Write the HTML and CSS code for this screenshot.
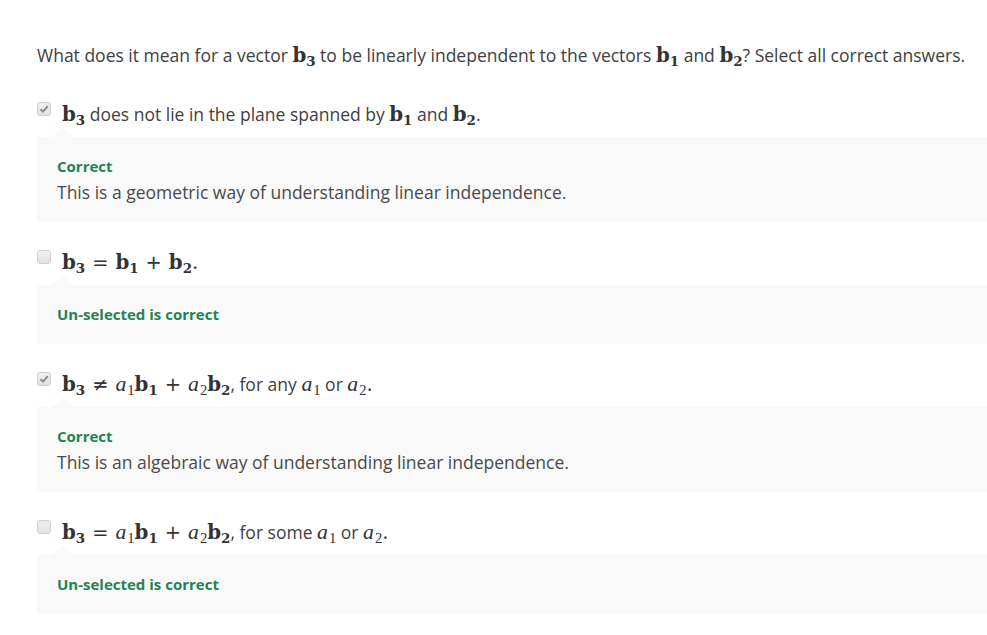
FILE: index.html
```html
<!DOCTYPE html>
<html>
<head>
<meta charset="utf-8">
<link rel="stylesheet" href="styles.css">
</head>
<body>
<div class="quiz">
  <p class="question">What does it mean for a vector <span class="m"><b>b</b><sub>3</sub></span> to be linearly independent to the vectors <span class="m"><b>b</b><sub>1</sub></span> and <span class="m"><b>b</b><sub>2</sub></span>? Select all correct answers.</p>

  <div class="option">
    <span class="cb checked"><svg viewBox="0 0 14 14" width="14" height="14"><path d="M3.5 7.2 L6 9.6 L10.8 4.2" fill="none" stroke="#8a8a8a" stroke-width="2"/></svg></span>
    <span class="label"><span class="m"><b>b</b><sub>3</sub></span> does not lie in the plane spanned by <span class="m"><b>b</b><sub>1</sub></span> and <span class="m"><b>b</b><sub>2</sub></span>.</span>
  </div>
  <div class="feedback">
    <div class="status">Correct</div>
    <div class="explain">This is a geometric way of understanding linear independence.</div>
  </div>

  <div class="option">
    <span class="cb"></span>
    <span class="label"><span class="m"><b>b</b><sub>3</sub><span class="op">=</span><b>b</b><sub>1</sub><span class="op">+</span><b>b</b><sub>2</sub>.</span></span>
  </div>
  <div class="feedback">
    <div class="status">Un-selected is correct</div>
  </div>

  <div class="option">
    <span class="cb checked"><svg viewBox="0 0 14 14" width="14" height="14"><path d="M3.5 7.2 L6 9.6 L10.8 4.2" fill="none" stroke="#8a8a8a" stroke-width="2"/></svg></span>
    <span class="label"><span class="m"><b>b</b><sub>3</sub><span class="op">&ne;</span><i>a</i><sub class="n">1</sub><b>b</b><sub>1</sub><span class="op">+</span><i>a</i><sub class="n">2</sub><b>b</b><sub>2</sub></span>, for any <span class="m"><i>a</i><sub class="n">1</sub></span> or <span class="m"><i>a</i><sub class="n">2</sub>.</span></span>
  </div>
  <div class="feedback">
    <div class="status">Correct</div>
    <div class="explain">This is an algebraic way of understanding linear independence.</div>
  </div>

  <div class="option">
    <span class="cb"></span>
    <span class="label"><span class="m"><b>b</b><sub>3</sub><span class="op">=</span><i>a</i><sub class="n">1</sub><b>b</b><sub>1</sub><span class="op">+</span><i>a</i><sub class="n">2</sub><b>b</b><sub>2</sub></span>, for some <span class="m"><i>a</i><sub class="n">1</sub></span> or <span class="m"><i>a</i><sub class="n">2</sub>.</span></span>
  </div>
  <div class="feedback">
    <div class="status">Un-selected is correct</div>
  </div>
</div>
</body>
</html>
```

FILE: styles.css
```css
html, body {
  margin: 0;
  padding: 0;
  background: #ffffff;
}
body {
  font-family: "Open Sans", "Liberation Sans", sans-serif;
  color: #404040;
  font-size: 17.5px;
}
.quiz {
  padding: 44px 0 0 37px;
}
.question {
  margin: 0 0 32px 0;
  line-height: 22px;
}
.m {
  font-family: "DejaVu Serif", "Liberation Serif", serif;
  font-size: 1.13em;
  color: #333;
  line-height: 1;
}
.m b {
  font-weight: bold;
  line-height: 1;
}
.m i {
  font-family: "Liberation Serif", serif;
  font-style: italic;
  font-size: 1.1em;
  line-height: 1;
  padding-right: 1px;
}
.m sub {
  font-size: 0.68em;
  font-weight: bold;
  vertical-align: -0.28em;
  line-height: 0;
}
.m sub.n {
  font-family: "Liberation Serif", serif;
  font-weight: normal;
  font-size: 0.74em;
}
.op {
  font-family: "DejaVu Sans", sans-serif;
  font-weight: normal;
  margin: 0 7px;
  font-size: 0.98em;
  line-height: 1;
}
.option {
  display: flex;
  align-items: flex-start;
  gap: 11px;
  line-height: 24px;
}
.label {
  padding-top: 4px;
}
.cb {
  flex: none;
  width: 14px;
  height: 14px;
  margin-top: 4px;
  box-sizing: border-box;
  border: 1px solid #cfcfcf;
  border-radius: 3px;
  background: linear-gradient(#f0f0f0, #e2e2e2);
  display: flex;
}
.cb svg {
  margin: -1px;
}
.feedback {
  position: relative;
  background: #f9f9f9;
  margin: 11px 0 24px 0;
  padding: 19px 20px 20px 20px;
}
.feedback::before {
  content: "";
  position: absolute;
  top: -9px;
  left: 15px;
  border-left: 11px solid transparent;
  border-right: 11px solid transparent;
  border-bottom: 9px solid #f9f9f9;
}
.status {
  color: #1f8354;
  font-weight: 700;
  font-size: 15px;
  line-height: 20px;
}
.explain {
  font-size: 17.5px;
  line-height: 20px;
  color: #4a4a4a;
  padding-top: 6px;
}
```
